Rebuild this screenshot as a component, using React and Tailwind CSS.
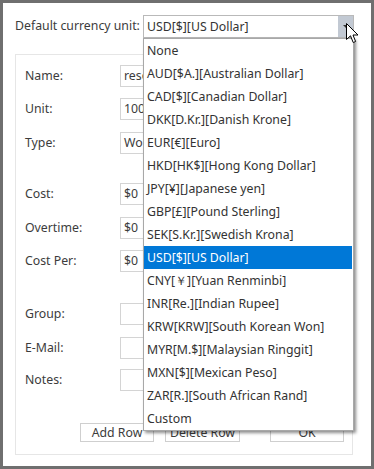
import React from "react";

const currencies = [
  "None",
  "AUD[$A.][Australian Dollar]",
  "CAD[$][Canadian Dollar]",
  "DKK[D.Kr.][Danish Krone]",
  "EUR[€][Euro]",
  "HKD[HK$][Hong Kong Dollar]",
  "JPY[¥][Japanese yen]",
  "GBP[£][Pound Sterling]",
  "SEK[S.Kr.][Swedish Krona]",
  "USD[$][US Dollar]",
  "CNY[￥][Yuan Renminbi]",
  "INR[Re.][Indian Rupee]",
  "KRW[KRW][South Korean Won]",
  "MYR[M.$][Malaysian Ringgit]",
  "MXN[$][Mexican Peso]",
  "ZAR[R.][South African Rand]",
  "Custom",
];

const rows = [
  { label: "Name:", value: "resource", mt: "mt-[10px]" },
  { label: "Unit:", value: "100%", mt: "mt-[11px]" },
  { label: "Type:", value: "Work", mt: "mt-[12px]" },
  { label: "Cost:", value: "$0", mt: "mt-[29px]" },
  { label: "Overtime:", value: "$0", mt: "mt-[12px]" },
  { label: "Cost Per:", value: "$0", mt: "mt-[11px]" },
  { label: "Group:", value: "", mt: "mt-[31px]" },
  { label: "E-Mail:", value: "", mt: "mt-[12px]" },
  { label: "Notes:", value: "", mt: "mt-[10px]" },
];

function Row({ label, value, mt }) {
  return (
    <div className={`flex items-center h-[22px] ${mt}`}>
      <div className="w-[104px] pl-[9px] text-[12.3px] text-[#3c3c3c] whitespace-nowrap">{label}</div>
      <div className="w-[215px] h-[22px] border border-[#d4d4d4] bg-white px-[3px] text-[12.3px] leading-[20px] text-[#3c3c3c] whitespace-nowrap overflow-hidden">
        {value}
      </div>
    </div>
  );
}

function Btn({ children, className = "" }) {
  return (
    <div
      className={`h-[19px] border border-[#cfcfcf] bg-white text-[12.3px] leading-[17px] text-[#3c3c3c] text-center whitespace-nowrap ${className}`}
    >
      {children}
    </div>
  );
}

function Cursor() {
  return (
    <svg width="13" height="21" viewBox="0 0 13 21" className="absolute left-[343px] top-[20px]">
      <path
        d="M0.5 0.5 L0.5 16.5 L4.5 12.8 L7.2 19.5 L9.6 18.5 L7 12 L12 12 Z"
        fill="#fff"
        stroke="#000"
        strokeWidth="1"
        strokeLinejoin="miter"
      />
    </svg>
  );
}

export default function App() {
  return (
    <div
      className="relative w-[374px] h-[469px] border-[3px] border-[#6f6f6f] bg-white overflow-hidden"
      style={{ fontFamily: '"Noto Sans", "Open Sans", Arial, sans-serif' }}
    >
      {/* top row */}
      <div className="flex items-center h-[23px] mt-[12px] pl-[12px]">
        <div className="w-[128px] text-[12.3px] text-[#3c3c3c] whitespace-nowrap">Default currency unit:</div>
        <div className="flex w-[211px] h-[23px] border border-[#b9b9b9] bg-white">
          <div className="flex-1 pl-[3px] text-[12.3px] leading-[21px] text-[#333] whitespace-nowrap">USD[$][US Dollar]</div>
          <div className="w-[15px] h-full bg-[#c2c9d3] flex items-center justify-center">
            <div className="w-0 h-0 border-l-[3px] border-r-[3px] border-t-[3px] border-l-transparent border-r-transparent border-t-[#333]" />
          </div>
        </div>
      </div>

      {/* settings panel */}
      <div className="ml-[12px] mt-[16px] w-[338px] h-[401px] border border-[#e6e6e6]">
        {rows.map((r) => (
          <Row key={r.label} {...r} />
        ))}
        <div className="flex mt-[32px] pl-[64px]">
          <Btn className="w-[74px]">Add Row</Btn>
          <Btn className="w-[75px] ml-[11px]">Delete Row</Btn>
          <Btn className="w-[74px] ml-[30px]">OK</Btn>
        </div>
      </div>

      {/* dropdown list */}
      <div className="absolute left-[140px] top-[35px] w-[211px] h-[393px] border border-[#a8a8a8] bg-white shadow-[2px_2px_3px_rgba(0,0,0,0.45)]">
        {currencies.map((c) => (
          <div
            key={c}
            className={`h-[23px] pl-[3px] text-[12.3px] leading-[23px] whitespace-nowrap ${
              c === "USD[$][US Dollar]" ? "bg-[#0078d7] text-white mr-[1px]" : "text-[#333]"
            }`}
          >
            {c}
          </div>
        ))}
      </div>

      <Cursor />
    </div>
  );
}
